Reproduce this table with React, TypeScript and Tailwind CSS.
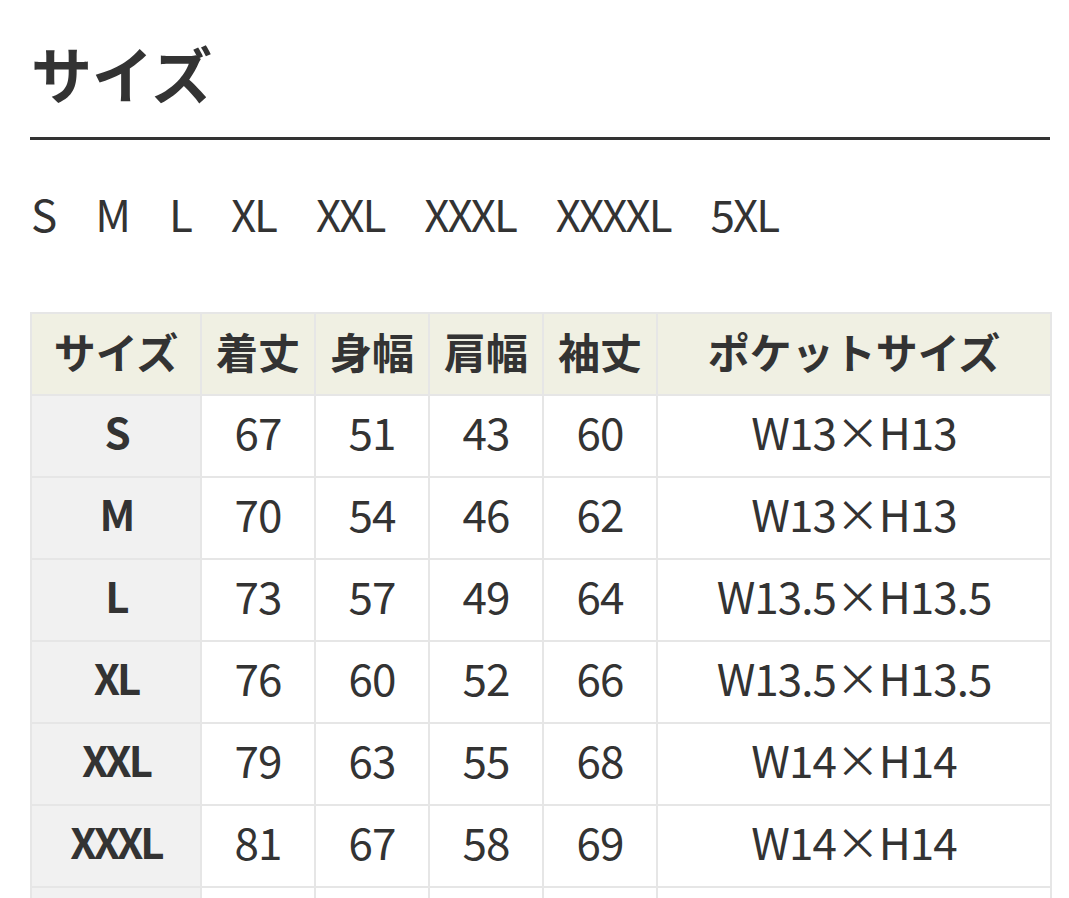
const sizes = ["S", "M", "L", "XL", "XXL", "XXXL", "XXXXL", "5XL"];

const rows = [
  ["S", "67", "51", "43", "60", "W13×H13"],
  ["M", "70", "54", "46", "62", "W13×H13"],
  ["L", "73", "57", "49", "64", "W13.5×H13.5"],
  ["XL", "76", "60", "52", "66", "W13.5×H13.5"],
  ["XXL", "79", "63", "55", "68", "W14×H14"],
  ["XXXL", "81", "67", "58", "69", "W14×H14"],
];

const headers = [
  { label: "サイズ", w: "w-[170px]" },
  { label: "着丈", w: "w-[114px]" },
  { label: "身幅", w: "w-[114px]" },
  { label: "肩幅", w: "w-[114px]" },
  { label: "袖丈", w: "w-[114px]" },
  { label: "ポケットサイズ", w: "w-[394px]" },
];

export default function App() {
  return (
    <div className="h-[898px] overflow-hidden bg-white text-[#333] font-['Noto_Sans_CJK_JP',sans-serif]">
      <div className="ml-[30px] w-[1020px]">
        <div className="pt-[40px] pb-[31px] border-b-[3px] border-[#333]">
          <h1 className="m-0 pl-[1px] text-[61px] leading-[66px] font-bold">サイズ</h1>
        </div>

        <div className="mt-[50px] flex gap-[40px] pl-[1px] text-[44px] leading-[46px] tracking-[-2px]">
          {sizes.map((s) => (
            <span key={s}>{s}</span>
          ))}
        </div>

        <table className="mt-[76px] w-[1020px] table-fixed border-collapse border-2 border-[#e8e8e8]">
          <thead>
            <tr>
              {headers.map((h) => (
                <th
                  key={h.label}
                  className={`${h.w} h-[82px] pb-[6px] border-2 border-[#e6e6e6] bg-[#f0f0e3] text-[42px] font-bold leading-none text-center`}
                >
                  {h.label}
                </th>
              ))}
            </tr>
          </thead>
          <tbody>
            {rows.map((r) => (
              <tr key={r[0]}>
                {r.map((c, i) => (
                  <td
                    key={i}
                    className={
                      i === 0
                        ? "h-[82px] pb-[10px] border-2 border-[#e6e6e6] bg-[#f1f1f1] text-center text-[42px] font-bold leading-none tracking-[-3px]"
                        : "h-[82px] pb-[10px] border-2 border-[#e6e6e6] bg-white text-center text-[44px] leading-none tracking-[-1px]"
                    }
                  >
                    {c}
                  </td>
                ))}
              </tr>
            ))}
            {/* next row continues below the fold */}
            <tr>
              {headers.map((h, i) => (
                <td
                  key={h.label}
                  className={
                    i === 0
                      ? "h-[82px] border-2 border-[#e6e6e6] bg-[#f1f1f1]"
                      : "h-[82px] border-2 border-[#e6e6e6] bg-white"
                  }
                />
              ))}
            </tr>
          </tbody>
        </table>
      </div>
    </div>
  );
}
